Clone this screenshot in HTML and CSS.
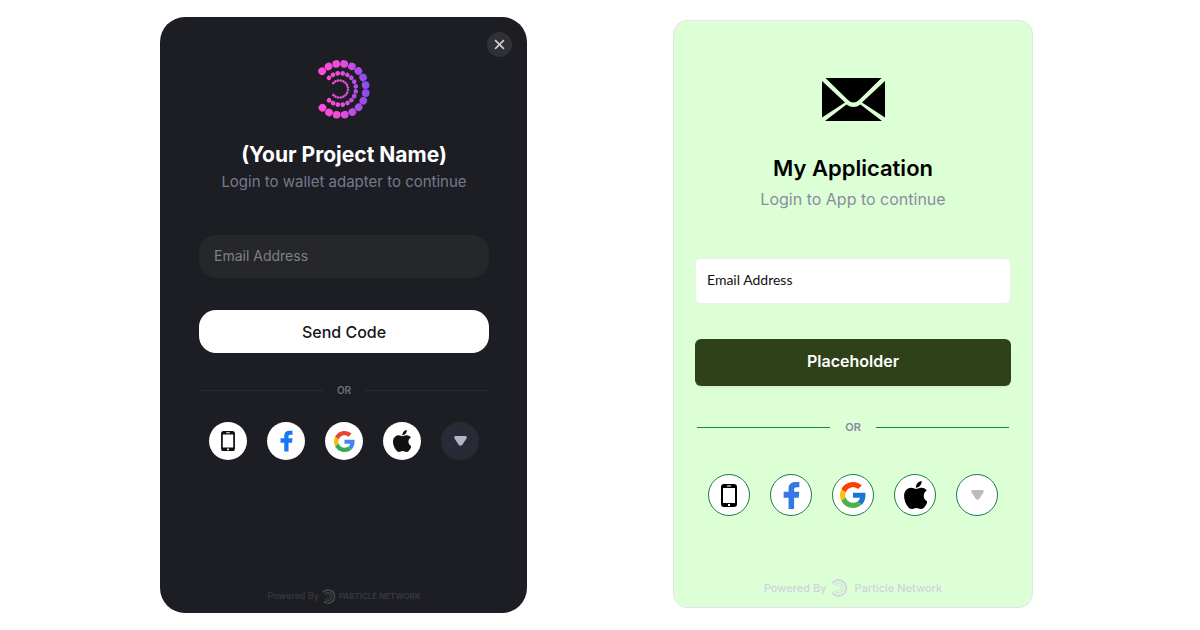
FILE: index.html
```html
<!DOCTYPE html>
<html lang="en">
<head>
<meta charset="utf-8">
<title>Login</title>
<link rel="stylesheet" href="styles.css">
</head>
<body>
<svg class="defs" aria-hidden="true">
  <defs>
    <linearGradient id="glow" gradientUnits="userSpaceOnUse" x1="60" y1="0" x2="208" y2="0">
      <stop offset="0" stop-color="#ff4bdb"/>
      <stop offset="0.4" stop-color="#f04bdc"/>
      <stop offset="1" stop-color="#824df0"/>
    </linearGradient>
    <symbol id="rings" viewBox="53 30 157 179">
      <g fill="none" stroke-linecap="round" stroke-dasharray="0.01 0.99">
        <path pathLength="15.1" stroke-width="23" d="M65 64A78 78 0 1 1 65 174"/>
        <path pathLength="15.1" stroke-width="14" d="M86 84A48 48 0 1 1 86 152"/>
        <path pathLength="15.1" stroke-width="8" d="M99 100A26 26 0 1 1 99 136"/>
      </g>
    </symbol>
    <symbol id="phone" viewBox="0 0 16 23">
      <path fill-rule="evenodd" d="M3 0H13Q16 0 16 3V20Q16 23 13 23H3Q0 23 0 20V3Q0 0 3 0ZM2 4V19H14V4ZM6 1.5V2.5H10V1.5ZM7 20V22H9V20Z"/>
    </symbol>
    <symbol id="facebook" viewBox="262 46 52 87">
      <path d="M279 131V96H264V78H279V68C279 55 287 48 300 48H312V64H304C298 64 296 67 296 71V78H312L310 96H296V131Z"/>
    </symbol>
    <symbol id="google" viewBox="0 0 48 48">
      <path class="g-red" d="M24 9.5c3.54 0 6.71 1.22 9.21 3.6l6.85-6.85C35.9 2.38 30.47 0 24 0 14.62 0 6.51 5.38 2.56 13.22l7.98 6.19C12.43 13.72 17.74 9.5 24 9.5z"/>
      <path class="g-blue" d="M46.98 24.55c0-1.57-.15-3.09-.38-4.55H24v9.02h12.94c-.58 2.96-2.26 5.48-4.78 7.18l7.73 6c4.51-4.18 7.09-10.36 7.09-17.65z"/>
      <path class="g-yellow" d="M10.53 28.59c-.48-1.45-.76-2.99-.76-4.59s.27-3.14.76-4.59l-7.98-6.19C.92 16.46 0 20.12 0 24c0 3.88.92 7.54 2.56 10.78l7.97-6.19z"/>
      <path class="g-green" d="M24 48c6.48 0 11.93-2.13 15.89-5.81l-7.73-6c-2.15 1.45-4.92 2.3-8.16 2.3-6.26 0-11.57-4.22-13.47-9.91l-7.98 6.19C6.51 42.62 14.62 48 24 48z"/>
    </symbol>
    <symbol id="apple" viewBox="4 32 366 448">
      <path d="M318.7 268.7c-.2-36.7 16.4-64.4 50-84.8-18.8-26.9-47.2-41.7-84.7-44.6-35.5-2.8-74.3 20.7-88.5 20.7-15 0-49.4-19.7-76.4-19.7C63.3 141.2 4 184.8 4 273.5q0 39.3 14.4 81.2c12.8 36.7 59 126.7 107.2 125.2 25.2-.6 43-17.9 75.8-17.9 31.8 0 48.3 17.9 76.4 17.9 48.6-.7 90.4-82.5 102.6-119.3-65.2-30.7-61.7-90-61.7-91.9zm-56.6-164.2c27.3-32.4 24.8-61.9 24-72.5-24.1 1.4-52 16.4-67.9 34.9-17.5 19.8-27.8 44.3-25.6 71.9 26.1 2 49.9-11.4 69.5-34.3z"/>
    </symbol>
    <symbol id="more" viewBox="0 0 13 10">
      <path d="M1.5 0H11.5Q13.5 .5 12.5 2.5L8.500 8.500Q6.500 11 4.500 8.500L.5 2.500Q-.5 .5 1.500 0Z"/>
    </symbol>
  </defs>
</svg>

<main class="stage">
  <section class="card dark">
    <button class="close" type="button" aria-label="Close">
      <svg viewBox="0 0 10 10"><path d="M1 1L9 9M9 1L1 9"/></svg>
    </button>
    <svg class="brand"><use href="#rings"/></svg>
    <h1 class="title">(Your Project Name)</h1>
    <p class="subtitle">Login to wallet adapter to continue</p>
    <form class="form">
      <input class="field" type="email" placeholder="Email Address" aria-label="Email Address">
      <button class="submit" type="button">Send Code</button>
    </form>
    <div class="divider"><span>OR</span></div>
    <div class="socials">
      <button class="social" type="button" aria-label="Phone"><svg class="i-phone"><use href="#phone"/></svg></button>
      <button class="social" type="button" aria-label="Facebook"><svg class="i-facebook"><use href="#facebook"/></svg></button>
      <button class="social" type="button" aria-label="Google"><svg class="i-google"><use href="#google"/></svg></button>
      <button class="social" type="button" aria-label="Apple"><svg class="i-apple"><use href="#apple"/></svg></button>
      <button class="social more" type="button" aria-label="More"><svg class="i-more"><use href="#more"/></svg></button>
    </div>
    <footer class="powered"><span>Powered By</span><svg class="mark"><use href="#rings"/></svg><strong>PARTICLE NETWORK</strong></footer>
  </section>

  <section class="card green">
    <svg class="brand" viewBox="0 0 63 43">
      <path d="M3.500 0H59.500L37 22Q31.500 27 26 22ZM0 3L23 24.500L0 39.500ZM63 3L40 24.500L63 39.500ZM3 43L24.500 26.500Q31.500 31.500 38.500 26.500L60 43Z"/>
    </svg>
    <h1 class="title">My Application</h1>
    <p class="subtitle">Login to App to continue</p>
    <form class="form">
      <input class="field" type="email" placeholder="Email Address" aria-label="Email Address">
      <button class="submit" type="button">Placeholder</button>
    </form>
    <div class="divider"><span>OR</span></div>
    <div class="socials">
      <button class="social" type="button" aria-label="Phone"><svg class="i-phone"><use href="#phone"/></svg></button>
      <button class="social" type="button" aria-label="Facebook"><svg class="i-facebook"><use href="#facebook"/></svg></button>
      <button class="social" type="button" aria-label="Google"><svg class="i-google"><use href="#google"/></svg></button>
      <button class="social" type="button" aria-label="Apple"><svg class="i-apple"><use href="#apple"/></svg></button>
      <button class="social more" type="button" aria-label="More"><svg class="i-more"><use href="#more"/></svg></button>
    </div>
    <footer class="powered"><span>Powered By</span><svg class="mark"><use href="#rings"/></svg><span>Particle Network</span></footer>
  </section>
</main>
</body>
</html>
```
FILE: styles.css
```css
* { box-sizing: border-box; }

body {
  margin: 0;
  background: #fff;
  font-family: Inter, "Liberation Sans", sans-serif;
}

button, input { font: inherit; margin: 0; border: 0; }
button { padding: 0; cursor: pointer; }
svg { display: block; }
.defs { position: absolute; width: 0; height: 0; }

.stage {
  display: flex;
  justify-content: center;
  gap: 146px;
  min-height: 100vh;
  padding: 17px 7px 17px 0;
}

.card {
  position: relative;
  display: flex;
  flex-direction: column;
  align-items: center;
}
.title, .subtitle { margin: 0; text-align: center; }
.title { line-height: 28px; }
.subtitle { line-height: 20px; }
.form { display: flex; flex-direction: column; width: 100%; }
.field { width: 100%; outline: 0; }
.submit { width: 100%; }
.divider { display: flex; align-items: center; width: 100%; line-height: 16px; }
.divider::before, .divider::after { content: ""; flex: 1; height: 1px; background: currentColor; }
.socials { display: flex; gap: 20px; }
.social {
  display: grid;
  place-items: center;
  border-radius: 50%;
  background: #fff;
}
.powered { display: flex; align-items: center; margin-top: auto; line-height: 16px; }

/* Dark theme */
.dark {
  flex: 0 1 367px;
  padding: 43px 38px 9px 39px;
  border-radius: 25px;
  background: #1d1e23;
  --red: #ea4335;
  --blue: #4285f4;
  --yellow: #fbbc05;
  --green: #34a853;
}
.close {
  position: absolute;
  top: 15px;
  right: 15px;
  display: grid;
  place-items: center;
  width: 25px;
  height: 25px;
  border-radius: 50%;
  background: #303136;
}
.close svg { width: 11px; height: 11px; fill: none; stroke: #d0d0d2; stroke-width: 1.5; }
.dark .brand { width: 52px; height: 59px; stroke: url(#glow); }
.dark .title { margin-top: 22px; font-size: 21px; font-weight: 700; color: #fff; }
.dark .subtitle { margin-top: 3px; font-size: 15px; color: #77798f; }
.dark .form { margin-top: 43px; gap: 32px; }
.dark .field {
  height: 43px;
  padding: 0 15px 2px;
  border-radius: 17px;
  background: #26272a;
  color: #fff;
  font-size: 14px;
}
.dark .field::placeholder { color: #808184; opacity: 1; }
.dark .submit {
  height: 43px;
  border-radius: 17px;
  background: #fff;
  color: #15161a;
  font-size: 16px;
  font-weight: 500;
}
.dark .divider { margin-top: 29px; color: #2a2b30; }
.dark .divider span { padding: 0 14px; color: #6b6d80; font-size: 10px; font-weight: 600; }
.dark .socials { margin-top: 24px; }
.dark .social { width: 38px; height: 38px; }
.dark .more { background: #292a35; }
.dark .powered { gap: 3px; color: #38393e; font-size: 9px; font-weight: 500; }
.dark .powered strong { font-size: 8px; font-weight: 600; }
.dark .mark { width: 14px; height: 15px; stroke: #4b4c50; }
.dark .i-phone { width: 14px; height: 20px; fill: #111; }
.dark .i-facebook { width: 13px; height: 22px; fill: #1877f2; }
.dark .i-google { width: 21px; height: 21px; }
.dark .i-apple { width: 18px; height: 22px; fill: #111; }
.dark .i-more { width: 13px; height: 10px; fill: #b3b4c6; }

/* Green theme */
.green {
  flex: 0 1 360px;
  margin: 3px 0 5px;
  padding: 57px 21px 10px;
  border: 1px solid #e2e4ea;
  border-radius: 14px;
  background: #dcffd6;
  --red: #ff3d00;
  --blue: #1976d2;
  --yellow: #ffc107;
  --green: #4caf50;
}
.green .brand { width: 63px; height: 43px; fill: #000; }
.green .title { margin-top: 33px; font-size: 22px; font-weight: 600; color: #000; }
.green .subtitle { margin-top: 7px; font-size: 16px; color: #8b8ca1; }
.green .form { margin-top: 49px; gap: 35px; }
.green .field {
  height: 46px;
  padding: 0 11px 4px;
  border: 1px solid #eef0ee;
  border-radius: 6px;
  background: #fff;
  color: #000;
  font-family: Lato, sans-serif;
  font-size: 14px;
}
.green .field::placeholder { color: #111; opacity: 1; }
.green .submit {
  height: 47px;
  padding-bottom: 3px;
  border-radius: 6px;
  background: #2f4118;
  box-shadow: 0 2px 0 rgba(0, 0, 0, 0.04);
  color: #fff;
  font-size: 16px;
  font-weight: 600;
}
.green .divider { margin-top: 33px; padding: 0 2px; color: #1c8048; }
.green .divider span { padding: 0 15px; color: #888a9c; font-size: 11px; font-weight: 600; }
.green .socials { margin-top: 39px; }
.green .social { width: 42px; height: 42px; border: 1px solid #1c8048; }
.green .powered { color: #d0d3dd; font-size: 11px; font-weight: 500; }
.green .mark { width: 17px; height: 18px; margin: 0 7px 0 4px; stroke: #d0d3dd; }
.green .i-phone { width: 16px; height: 23px; fill: #000; }
.green .i-facebook { width: 17px; height: 29px; fill: #3579e8; }
.green .i-google { width: 26px; height: 26px; }
.green .i-apple { width: 23px; height: 28px; fill: #000; }
.green .i-more { width: 13px; height: 10px; fill: #bbb; }

/* Faint dashes below the card edge */
.green::after {
  content: "";
  position: absolute;
  top: 100%;
  left: 82px;
  right: 76px;
  height: 1px;
  background: repeating-linear-gradient(90deg, #e2e4ea 0 6px, transparent 6px 14px);
}

.g-red { fill: var(--red); }
.g-blue { fill: var(--blue); }
.g-yellow { fill: var(--yellow); }
.g-green { fill: var(--green); }
```
